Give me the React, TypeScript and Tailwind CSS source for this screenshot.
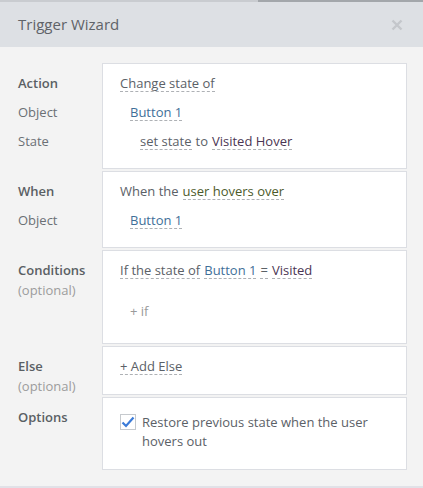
import React from "react";

const FONT = { fontFamily: '"Open Sans", "Noto Sans", sans-serif' };

function Dash({ children, tone = "text-[#5b6167]" }: { children: React.ReactNode; tone?: string }) {
  return (
    <span className={`inline-block border-b border-dashed border-[#aeb1b5] leading-[16px] ${tone}`}>
      {children}
    </span>
  );
}

function Row({ children, indent = "" }: { children: React.ReactNode; indent?: string }) {
  return <div className={`flex h-[29px] items-center gap-[4px] ${indent}`}>{children}</div>;
}

function Label({ title, rows = [], optional = false }: { title: string; rows?: string[]; optional?: boolean }) {
  return (
    <div className="w-[84px] shrink-0 pt-[6px]">
      <div className="flex h-[29px] items-center font-semibold text-[#5a5f64]">{title}</div>
      {optional && (
        <div className="-mt-[4px] h-[18px] leading-[18px] text-[#9c9c9c]">(optional)</div>
      )}
      {rows.map((r) => (
        <div key={r} className="flex h-[29px] items-center text-[#6b7075]">
          {r}
        </div>
      ))}
    </div>
  );
}

function Card({ children, pad = "pt-[5px] pb-[12px]" }: { children: React.ReactNode; pad?: string }) {
  return (
    <div className={`flex-1 border border-[#dcdee3] bg-white pl-[17px] ${pad}`}>{children}</div>
  );
}

export default function App() {
  return (
    <div className="flex h-[488px] w-[423px] flex-col bg-[#f3f3f3] text-[13px]" style={FONT}>
      <div className="flex h-[2px]">
        <div className="w-[258px] bg-[#c9ccd0]" />
        <div className="flex-1 bg-[#a3a7ab]" />
      </div>
      <div className="flex h-[45px] items-center justify-between bg-[#dde0e4] pl-[18px] pr-[20px]">
        <div className="text-[15px] text-[#5f6368]">Trigger Wizard</div>
        <svg width="12" height="12" viewBox="0 0 12 12">
          <path d="M1.5 1.5 L10.5 10.5 M10.5 1.5 L1.5 10.5" stroke="#c4c7cb" strokeWidth="2.4" />
        </svg>
      </div>

      <div className="flex flex-1 flex-col gap-[2px] border-b-2 border-[#e1e1e7] pl-[18px] pr-[16px] pt-[16px]">
        <div className="flex">
          <Label title="Action" rows={["Object", "State"]} />
          <Card>
            <Row>
              <Dash>Change state of</Dash>
            </Row>
            <Row indent="pl-[10px]">
              <Dash tone="text-[#3f6f98]">Button 1</Dash>
            </Row>
            <Row indent="pl-[20px]">
              <Dash>set state</Dash>
              <span className="text-[#5b6167]">to</span>
              <Dash tone="text-[#4a3553]">Visited Hover</Dash>
            </Row>
          </Card>
        </div>

        <div className="flex">
          <Label title="When" rows={["Object"]} />
          <Card>
            <Row>
              <span className="text-[#5b6167]">When the</span>
              <Dash tone="text-[#4c5a2b]">user hovers over</Dash>
            </Row>
            <Row indent="pl-[10px]">
              <Dash tone="text-[#3f6f98]">Button 1</Dash>
            </Row>
          </Card>
        </div>

        <div className="flex">
          <Label title="Conditions" optional />
          <Card pad="pt-[5px] pb-[17px]">
            <Row>
              <Dash>If the state of</Dash>
              <Dash tone="text-[#3f6f98]">Button 1</Dash>
              <Dash>=</Dash>
              <Dash tone="text-[#4a3553]">Visited</Dash>
            </Row>
            <div className="mt-[12px] flex h-[29px] items-center pl-[10px] text-[#9a9a9a]">+ if</div>
          </Card>
        </div>

        <div className="flex">
          <Label title="Else" optional />
          <Card>
            <Row>
              <Dash>+ Add Else</Dash>
            </Row>
          </Card>
        </div>

        <div className="flex">
          <Label title="Options" />
          <Card pad="pt-[15px] pb-[18px]">
            <div className="flex items-start">
              <div className="mt-[1px] flex h-[16px] w-[16px] shrink-0 items-center justify-center border border-[#c6cace] bg-white">
                <svg width="14" height="12" viewBox="0 0 14 12">
                  <path d="M1.5 6.5 L5 10 L12.5 1.5" fill="none" stroke="#3b7bd8" strokeWidth="2.2" />
                </svg>
              </div>
              <div className="ml-[6px] leading-[19px] text-[#5b6167]">
                Restore previous state when the user
                <br />
                hovers out
              </div>
            </div>
          </Card>
        </div>
      </div>
    </div>
  );
}
